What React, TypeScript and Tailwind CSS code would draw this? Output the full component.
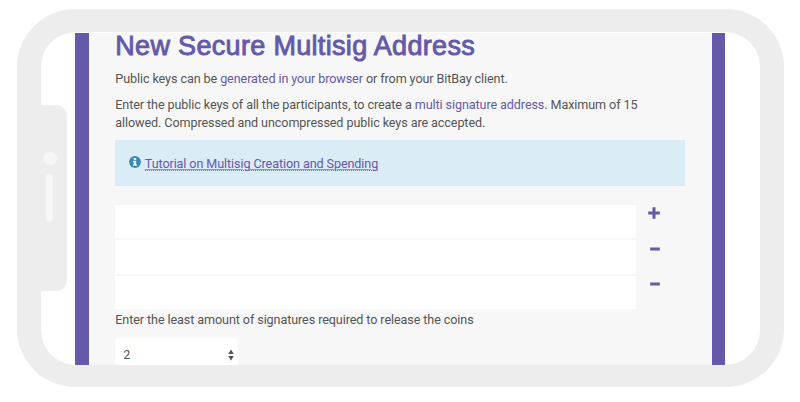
import React from "react";

function InfoIcon() {
  return (
    <svg viewBox="0 0 12 12" className="mt-[16px] h-3 w-3 shrink-0">
      <circle cx="6" cy="6" r="5.9" fill="#378aaf" />
      <path d="M4.6 2h2.6v1.9H4.6zM4 4.8h3.2v3.5H8v1.5H4V8.3h.7v-2H4z" fill="#e4f2f8" />
    </svg>
  );
}

function KeyRow({ first = false }: { first?: boolean }) {
  return (
    <div className="flex h-[33.4px]">
      <div className="w-[521px] bg-white" />
      {first ? (
        <svg viewBox="0 0 12 12" className="mt-[2px] ml-[12px] h-3 w-3">
          <path d="M6 .2v11.6M.2 6h11.6" stroke="#6559a9" strokeWidth="3" />
        </svg>
      ) : (
        <svg viewBox="0 0 10 4" className="mt-[6.5px] ml-[14px] h-1 w-2.5">
          <path d="M.2 2h9.6" stroke="#6559a9" strokeWidth="3.2" />
        </svg>
      )}
    </div>
  );
}

export default function App() {
  return (
    <div className="h-[402px] w-[800px] overflow-hidden bg-white pt-[9px] pl-[17px] font-['Roboto',sans-serif] text-[12.6px] leading-[18px] tracking-[-0.095px] text-[#555]">
      <div className="h-[378px] w-[766.5px] rounded-[58px] bg-[#ededed] pt-[23px] pl-6">
        <div className="flex h-[333px] w-[718.5px] overflow-hidden rounded-[35px] bg-white">
          <div className="w-[34.3px] shrink-0 pt-[73px]">
            <div className="flex h-[186px] w-[26px] flex-col rounded-r-[11px] bg-[#ededed] pt-[46.5px] pl-[2px]">
              <div className="h-[13.5px] w-[13.5px] rounded-full bg-[#f6f6f6]" />
              <div className="mt-[9px] ml-[3px] h-[48px] w-[7px] rounded-full bg-[#f6f6f6]" />
            </div>
          </div>
          <main className="mt-px h-[332px] w-[649.7px] shrink-0 border-r-[13px] border-l-[14px] border-[#6559a9] bg-[#f7f7f7] pl-[26px]">
            <h1 className="h-[26px] font-['Liberation_Sans',Arial,sans-serif] text-[27px] leading-[26px] tracking-[0.32px] whitespace-nowrap text-[#6559a9] [-webkit-text-stroke:0.9px_#6559a9]">
              New Secure Multisig Address
            </h1>
            <p className="mt-[11px] whitespace-nowrap">
              Public keys can be <span className="text-[#6559a9]">generated in your browser</span> or from your BitBay client.
            </p>
            <p className="mt-[8px] whitespace-nowrap">
              Enter the public keys of all the participants, to create a <span className="text-[#6559a9]">multi signature address</span>. Maximum of 15
              <br />
              allowed. Compressed and uncompressed public keys are accepted.
            </p>
            <div className="mt-[8px] flex h-[46px] w-[570px] bg-[#daecf6] pl-[14px]">
              <InfoIcon />
              <span className="mt-[15px] ml-[3.5px] h-[16px] border-b border-dotted border-[#7770b4] whitespace-nowrap text-[#6559a9] underline decoration-[#6559a9]/60 decoration-1 underline-offset-1">
                Tutorial on Multisig Creation and Spending
              </span>
            </div>
            <div className="mt-[19px] flex flex-col gap-[2px]">
              <KeyRow first />
              <KeyRow />
              <KeyRow />
            </div>
            <p className="mt-[2.3px] whitespace-nowrap">Enter the least amount of signatures required to release the coins</p>
            <div className="mt-[9px] flex h-[27px] w-[123px] justify-between rounded-t-[4px] bg-white pt-[8px] pr-[4.5px] pl-[8px]">
              <span>2</span>
              <svg viewBox="0 0 6 12" className="mt-[3px] h-3 w-1.5" fill="#555">
                <path d="M3 .5 5.8 5H.2zM3 11.5.2 7h5.6z" />
              </svg>
            </div>
          </main>
        </div>
      </div>
    </div>
  );
}
